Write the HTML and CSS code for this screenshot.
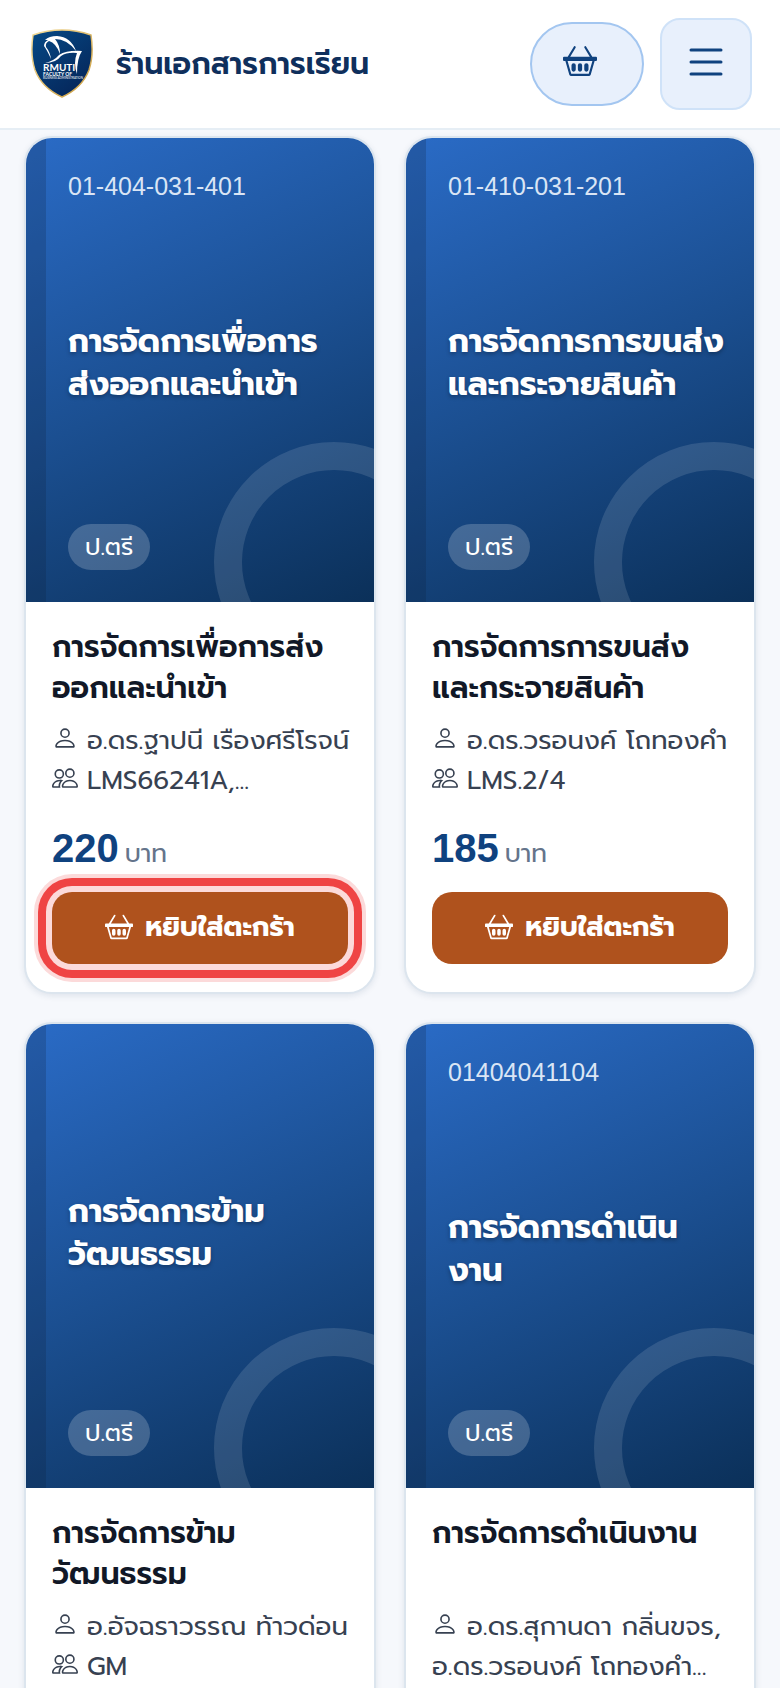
FILE: index.html
```html
<!DOCTYPE html>
<html lang="th">
<head>
<meta charset="utf-8">
<meta name="viewport" content="width=device-width, initial-scale=1">
<title>ร้านเอกสารการเรียน</title>
<link rel="stylesheet" href="styles.css">
</head>
<body>
<svg class="sprite" aria-hidden="true">
  <symbol id="basket" viewBox="0 0 16 16">
    <path d="M5.757 1.071a.5.5 0 0 1 .172.686L3.383 6h9.234L10.07 1.757a.5.5 0 1 1 .858-.514L13.783 6H15.500a.5.5 0 0 1 .5.5v1a.5.5 0 0 1-.5.5h-.623l-1.844 6.456a.75.75 0 0 1-.722.544H3.690a.75.75 0 0 1-.722-.544L1.123 8H.5a.5.5 0 0 1-.5-.5v-1A.5.5 0 0 1 .5 6h1.717L5.070 1.243a.5.5 0 0 1 .686-.172zM2.163 8l1.714 6h8.246l1.714-6H2.163zM4 10a1 1 0 0 1 2 0v2a1 1 0 1 1-2 0v-2zm3 0a1 1 0 0 1 2 0v2a1 1 0 1 1-2 0v-2zm4-1a1 1 0 0 1 1 1v2a1 1 0 1 1-2 0v-2a1 1 0 0 1 1-1z"/>
  </symbol>
  <symbol id="person" viewBox="0 0 16 16">
    <path d="M8 8a3 3 0 1 0 0-6 3 3 0 0 0 0 6zm2-3a2 2 0 1 1-4 0 2 2 0 0 1 4 0zm4 8c0 1-1 1-1 1H3s-1 0-1-1 1-4 6-4 6 3 6 4zm-1-.004c-.001-.246-.154-.986-.832-1.664C11.516 10.680 10.289 10 8 10c-2.290 0-3.516.680-4.168 1.332-.678.678-.830 1.418-.832 1.664h10z"/>
  </symbol>
  <symbol id="people" viewBox="0 0 16 16">
    <path d="M15 14s1 0 1-1-1-4-5-4-5 3-5 4 1 1 1 1h8zm-7.978-1A.261.261 0 0 1 7 12.996c.001-.264.167-1.030.760-1.720C8.312 10.629 9.282 10 11 10c1.717 0 2.687.630 3.240 1.276.593.690.758 1.457.760 1.720l-.008.002a.274.274 0 0 1-.014.002H7.022zM11 7a2 2 0 1 0 0-4 2 2 0 0 0 0 4zm3-2a3 3 0 1 1-6 0 3 3 0 0 1 6 0zM6.936 9.280a5.880 5.880 0 0 0-1.230-.247A7.350 7.350 0 0 0 5 9c-4 0-5 3-5 4 0 .667.333 1 1 1h4.216A2.238 2.238 0 0 1 5 13c0-1.010.377-2.042 1.090-2.904.243-.294.526-.569.846-.816zM4.920 10A5.493 5.493 0 0 0 4 13H1c0-.260.164-1.030.760-1.724.545-.636 1.492-1.256 3.160-1.275zM1.500 5.500a3 3 0 1 1 6 0 3 3 0 0 1-6 0zm3-2a2 2 0 1 0 0 4 2 2 0 0 0 0-4z"/>
  </symbol>
</svg>

<header class="topbar">
  <a class="brand" href="#">
    <svg class="brand-logo" viewBox="0 0 64 72" role="img" aria-label="RMUTI">
      <defs>
        <linearGradient id="shield" x1="0" y1="0" x2=".7" y2="1"><stop offset="0" stop-color="#064a86"/><stop offset="1" stop-color="#05265a"/></linearGradient>
        <linearGradient id="gold" x1="0" y1="0" x2="1" y2="1"><stop offset="0" stop-color="#f4dc9a"/><stop offset="1" stop-color="#c89a3c"/></linearGradient>
      </defs>
      <path d="M3 7Q32-3 61 7Q64 27 59 42Q52 60 32 69Q12 60 5 42Q0 27 3 7Z" fill="url(#shield)" stroke="url(#gold)" stroke-width="1.500"/>
      <path d="M15 12Q19 8 27 8Q41 9 46 23Q37 11 25 11Q30 17 30 26Q26 15 19 13Q15 15 16 19Q20 24 21 31Q17 22 14 18Q14 14 18 12Z" fill="#fff"/>
      <path d="M15 35Q24 33 29 27Q37 22 52 23Q47 30 47 46Q43 35 47 25Q37 24 31 28Q26 35 15 35Z" fill="#fff"/>
      <text class="logo-name" x="13" y="43">RMUTI</text>
      <text class="logo-sub" x="13" y="48">FACULTY OF</text>
      <text class="logo-tiny" x="13" y="51">BUSINESS ADMINISTRATION</text>
    </svg>
    <span class="brand-name">ร้านเอกสารการเรียน</span>
  </a>
  <div class="actions">
    <button class="cart-button" type="button" aria-label="ตะกร้า"><svg class="cart-icon"><use href="#basket"/></svg></button>
    <button class="menu-button" type="button" aria-label="เมนู"><svg class="menu-icon" viewBox="0 0 44 44"><path d="M7 8H37M7 20H37M7 32H37"/></svg></button>
  </div>
</header>

<main class="catalog">
  <article class="card">
    <div class="cover">
      <span class="code">01-404-031-401</span>
      <p class="cover-title">การจัดการเพื่อการ<br>ส่งออกและนำเข้า</p>
      <span class="level">ป.ตรี</span>
    </div>
    <div class="details">
      <h2 class="title">การจัดการเพื่อการส่ง<br>ออกและนำเข้า</h2>
      <p class="meta"><svg class="meta-icon"><use href="#person"/></svg>อ.ดร.ฐาปนี เรืองศรีโรจน์</p>
      <p class="meta"><svg class="meta-icon"><use href="#people"/></svg>LMS66241A,...</p>
      <p class="price"><strong class="amount">220</strong><span>บาท</span></p>
      <button class="add highlighted" type="button"><svg class="add-icon"><use href="#basket"/></svg>หยิบใส่ตะกร้า</button>
    </div>
  </article>

  <article class="card">
    <div class="cover">
      <span class="code">01-410-031-201</span>
      <p class="cover-title">การจัดการการขนส่ง<br>และกระจายสินค้า</p>
      <span class="level">ป.ตรี</span>
    </div>
    <div class="details">
      <h2 class="title">การจัดการการขนส่ง<br>และกระจายสินค้า</h2>
      <p class="meta"><svg class="meta-icon"><use href="#person"/></svg>อ.ดร.วรอนงค์ โถทองคำ</p>
      <p class="meta"><svg class="meta-icon"><use href="#people"/></svg>LMS.2/4</p>
      <p class="price"><strong class="amount">185</strong><span>บาท</span></p>
      <button class="add" type="button"><svg class="add-icon"><use href="#basket"/></svg>หยิบใส่ตะกร้า</button>
    </div>
  </article>

  <article class="card">
    <div class="cover">
      <p class="cover-title">การจัดการข้าม<br>วัฒนธรรม</p>
      <span class="level">ป.ตรี</span>
    </div>
    <div class="details">
      <h2 class="title">การจัดการข้าม<br>วัฒนธรรม</h2>
      <p class="meta"><svg class="meta-icon"><use href="#person"/></svg>อ.อัจฉราวรรณ ท้าวด่อน</p>
      <p class="meta"><svg class="meta-icon"><use href="#people"/></svg>GM</p>
    </div>
  </article>

  <article class="card">
    <div class="cover">
      <span class="code">01404041104</span>
      <p class="cover-title">การจัดการดำเนิน<br>งาน</p>
      <span class="level">ป.ตรี</span>
    </div>
    <div class="details">
      <h2 class="title">การจัดการดำเนินงาน</h2>
      <p class="meta"><svg class="meta-icon"><use href="#person"/></svg>อ.ดร.สุกานดา กลิ่นขจร,<br>อ.ดร.วรอนงค์ โถทองคำ...</p>
    </div>
  </article>
</main>
</body>
</html>
```

FILE: styles.css
```css
*, *::before, *::after { box-sizing: border-box; }

html { overflow: hidden; height: 100%; }

body {
  margin: 0;
  height: 100%;
  overflow: hidden;
  background: #f6f8fc;
  color: #111827;
  font-family: Prompt, "Noto Sans Thai", "Noto Sans", sans-serif;
}

p, h2 { margin: 0; }
button { font-family: inherit; cursor: pointer; }
svg { fill: currentColor; }
.sprite { display: none; }

.topbar {
  display: flex;
  align-items: center;
  justify-content: space-between;
  height: 130px;
  padding: 0 28px 0 30px;
  background: #fff;
  border-bottom: 2px solid #e6eef5;
}

.brand {
  display: flex;
  align-items: center;
  gap: 22px;
  color: #0f2f5c;
  text-decoration: none;
}
.brand-logo { width: 64px; height: 72px; }
.brand-name { font-size: 30px; font-weight: 600; white-space: nowrap; }
.logo-name { font: 700 10px Lato, sans-serif; fill: #fff; }
.logo-sub { font: 700 5px Lato, sans-serif; fill: #fff; }
.logo-tiny { font: 400 3px Lato, sans-serif; fill: #fff; }

.actions { display: flex; align-items: center; gap: 16px; }
.cart-button, .menu-button {
  display: flex;
  align-items: center;
  background: #e8f0fc;
  color: #0f427f;
}
.cart-button {
  width: 114px;
  height: 84px;
  padding: 0 0 6px 31px;
  border: 2px solid #a3c6f0;
  border-radius: 42px;
}
.cart-icon { width: 34px; height: 34px; }
.menu-button {
  justify-content: center;
  width: 92px;
  height: 92px;
  padding: 0;
  border: 2px solid #cfe2f8;
  border-radius: 20px;
}
.menu-icon { width: 44px; height: 44px; stroke: currentColor; stroke-width: 3; stroke-linecap: round; }

.catalog {
  display: grid;
  grid-template-columns: repeat(2, minmax(0, 1fr));
  gap: 28px;
  padding: 6px 24px 28px;
}

.card {
  overflow: hidden;
  background: #fff;
  border: 2px solid #dce5ee;
  border-radius: 28px;
  box-shadow: 0 2px 6px rgba(15, 47, 92, .1);
}

.cover {
  position: relative;
  display: flex;
  flex-direction: column;
  align-items: flex-start;
  aspect-ratio: 3 / 4;
  padding: 32px 24px 32px 42px;
  overflow: hidden;
  background: linear-gradient(155deg, #2a6bc6 0%, #1b4f91 50%, #0b3059 100%);
  color: #fff;
}
.cover::before {
  content: "";
  position: absolute;
  inset: 0 auto 0 0;
  width: 20px;
  background: rgba(15, 30, 60, .22);
}
.cover::after {
  content: "";
  position: absolute;
  right: -80px;
  bottom: -80px;
  width: 240px;
  height: 240px;
  border: 28px solid rgba(255, 255, 255, .12);
  border-radius: 50%;
}
.code { font: 400 25px/32px "Liberation Sans", Arial, sans-serif; color: #dae5f5; }
.cover-title {
  margin: auto 0;
  font-size: 32px;
  font-weight: 700;
  line-height: 43px;
  white-space: nowrap;
  text-shadow: 0 2px 4px rgba(0, 0, 0, .3);
}
.level {
  padding: 0 17px;
  border-radius: 23px;
  background: rgba(255, 255, 255, .2);
  font-size: 24px;
  font-weight: 400;
  line-height: 46px;
}

.details { padding: 25px 26px 28px; }
.title {
  min-height: 82px;
  margin-bottom: 12px;
  font-size: 30px;
  font-weight: 600;
  line-height: 41px;
  white-space: nowrap;
}
.meta { color: #374151; font-size: 26px; font-weight: 400; line-height: 40px; white-space: nowrap; }
.meta-icon { width: 26px; height: 26px; margin-right: 9px; vertical-align: -2px; }
.price {
  display: flex;
  align-items: baseline;
  gap: 6px;
  margin: 22px 0 13px;
  color: #64748b;
  font-size: 25px;
  line-height: 50px;
}
.amount { color: #0f427f; font-size: 40px; font-weight: 700; font-family: "Liberation Sans", Arial, sans-serif; }

.add {
  display: flex;
  align-items: center;
  justify-content: center;
  gap: 12px;
  width: 100%;
  height: 72px;
  padding: 0 0 3px;
  border: 0;
  border-radius: 20px;
  background: #af521d;
  color: #fff;
  font-size: 27px;
  font-weight: 700;
}
.add-icon { width: 28px; height: 28px; }
.highlighted { box-shadow: 0 0 0 6px #fcdada, 0 0 0 14px #ef4444, 0 0 0 18px #fcdada; }
```
